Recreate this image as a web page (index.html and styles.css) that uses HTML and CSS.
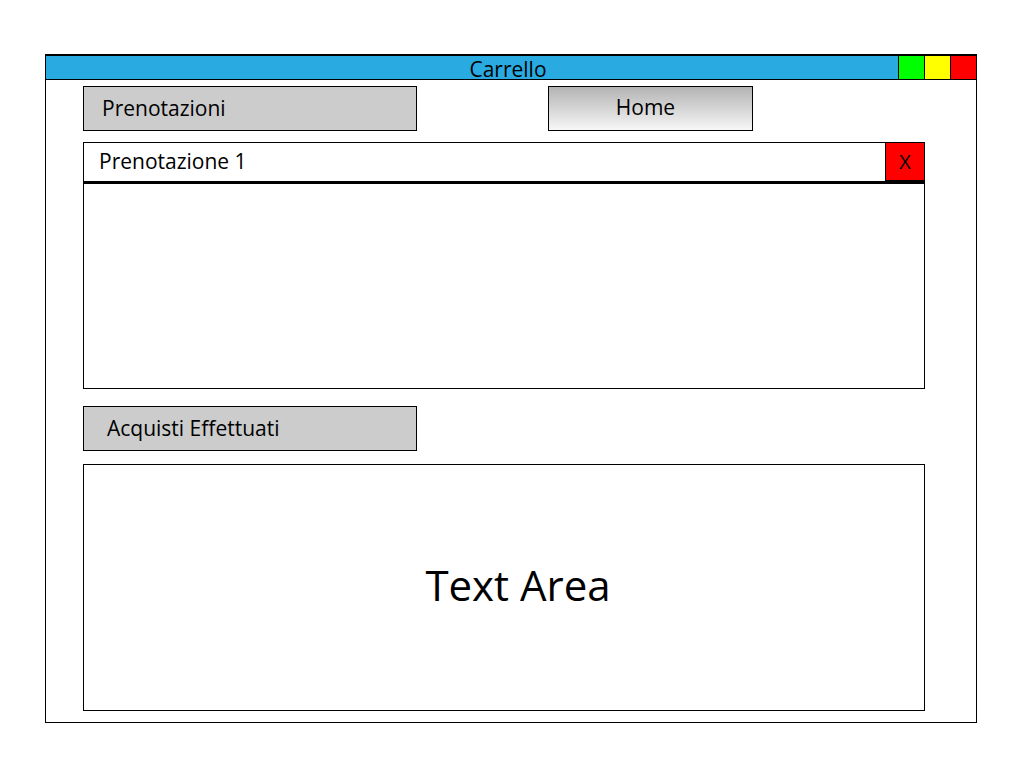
FILE: index.html
```html
<!DOCTYPE html>
<html lang="it">
<head>
<meta charset="utf-8">
<title>Carrello</title>
<link rel="stylesheet" href="styles.css">
</head>
<body>
<div class="window">
  <div class="titlebar">
    <div class="title">Carrello</div>
    <div class="controls">
      <span class="ctl green"></span>
      <span class="ctl yellow"></span>
      <span class="ctl red"></span>
    </div>
  </div>
  <div class="content">
    <div class="row-top">
      <div class="btn gray">Prenotazioni</div>
      <div class="btn home">Home</div>
    </div>
    <div class="panel">
      <div class="panel-head">
        <span class="panel-title">Prenotazione 1</span>
        <span class="close">X</span>
      </div>
      <div class="panel-body"></div>
    </div>
    <div class="btn gray acquisti">Acquisti Effettuati</div>
    <div class="textarea">Text Area</div>
  </div>
</div>
</body>
</html>
```
FILE: styles.css
```css
* { box-sizing: border-box; }
html, body { margin: 0; padding: 0; background: #fff; }
body { font-family: "Open Sans", "Liberation Sans", sans-serif; color: #000; }

.window {
  margin: 54px 0 0 45px;
  width: 932px;
  height: 669px;
  border: 1px solid #000;
  border-top-width: 2px;
}

.titlebar {
  height: 24px;
  background: #29abe2;
  border-bottom: 1px solid #000;
  display: flex;
  align-items: stretch;
}
.title {
  flex: 1;
  text-align: center;
  font-size: 21px;
  line-height: 26px;
  padding-left: 72px;
}
.controls { display: flex; }
.ctl {
  width: 26px;
  border-left: 1px solid #000;
}
.ctl.green { background: #00ff00; }
.ctl.yellow { background: #ffff00; }
.ctl.red { background: #ff0000; }

.content {
  padding: 6px 0 0 37px;
  display: flex;
  flex-direction: column;
  align-items: flex-start;
}

.row-top { display: flex; gap: 131px; }

.btn {
  height: 45px;
  border: 1px solid #000;
  font-size: 21px;
  display: flex;
  align-items: center;
}
.btn.gray {
  width: 334px;
  background: #cccccc;
  padding-left: 18px;
  padding-bottom: 2px;
}
.btn.home {
  width: 205px;
  justify-content: center;
  padding-right: 10px;
  background: linear-gradient(#b3b3b3, #f7f7f7);
  padding-bottom: 3px;
}

.panel {
  margin-top: 11px;
  width: 842px;
  height: 247px;
  border: 1px solid #000;
  display: flex;
  flex-direction: column;
}
.panel-head {
  height: 41px;
  display: flex;
  justify-content: space-between;
  border-bottom: 3px solid #000;
}
.panel-title {
  font-size: 21px;
  padding: 4px 0 0 15px;
}
.close {
  width: 39px;
  height: 38px;
  background: #ff0000;
  border-left: 1px solid #000;
  border-bottom: 1px solid #000;
  font-size: 20px;
  display: flex;
  align-items: center;
  justify-content: center;
}
.panel-body { flex: 1; }

.btn.acquisti {
  margin-top: 17px;
  padding-left: 23px;
}

.textarea {
  margin-top: 13px;
  width: 842px;
  height: 247px;
  border: 1px solid #000;
  display: flex;
  align-items: center;
  justify-content: center;
  font-size: 42px;
  padding: 0 0 6px 28px;
}
```
